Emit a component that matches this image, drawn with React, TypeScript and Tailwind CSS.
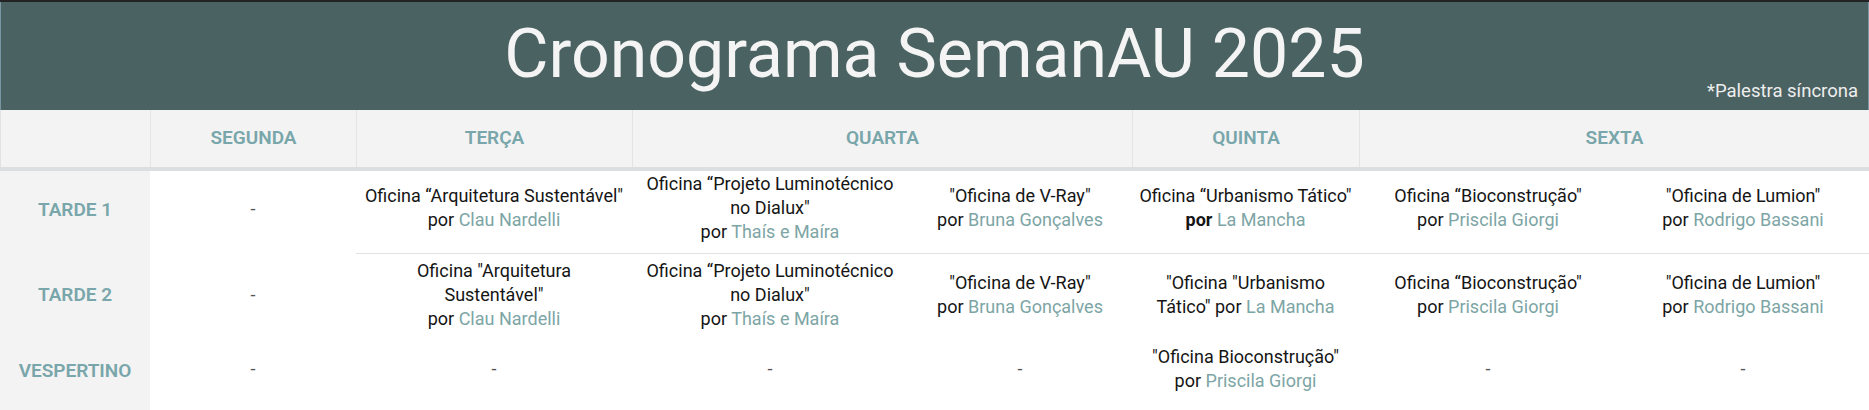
import type { ReactNode } from 'react';

type Talk = {
  lines: string[];
  name: string;
  prefix?: string;
  boldPor?: boolean;
};

type Cell = Talk | '-';

const days = [
  { label: 'SEGUNDA', span: 'col-span-1' },
  { label: 'TERÇA', span: 'col-span-1' },
  { label: 'QUARTA', span: 'col-span-2' },
  { label: 'QUINTA', span: 'col-span-1' },
  { label: 'SEXTA', span: 'col-span-2' },
];

const arquitetura: Talk = { lines: ['Oficina “Arquitetura Sustentável"'], name: 'Clau Nardelli' };
const luminotecnico: Talk = {
  lines: ['Oficina “Projeto Luminotécnico', 'no Dialux"'],
  name: 'Thaís e Maíra',
};
const vray: Talk = { lines: ['"Oficina de V-Ray"'], name: 'Bruna Gonçalves' };
const bioconstrucao: Talk = { lines: ['Oficina “Bioconstrução"'], name: 'Priscila Giorgi' };
const lumion: Talk = { lines: ['"Oficina de Lumion"'], name: 'Rodrigo Bassani' };

const rows: { label: string; pad: string; labelPad: string; cells: Cell[] }[] = [
  {
    label: 'TARDE 1',
    pad: 'pt-px pb-[9px]',
    labelPad: 'pt-[5px] pb-[9px]',
    cells: [
      '-',
      arquitetura,
      luminotecnico,
      vray,
      { lines: ['Oficina “Urbanismo Tático"'], name: 'La Mancha', boldPor: true },
      bioconstrucao,
      lumion,
    ],
  },
  {
    label: 'TARDE 2',
    pad: 'pt-[5px] pb-[9px]',
    labelPad: 'pt-[6px] pb-[9px]',
    cells: [
      '-',
      { lines: ['Oficina "Arquitetura', 'Sustentável"'], name: 'Clau Nardelli' },
      luminotecnico,
      vray,
      { lines: ['"Oficina "Urbanismo'], prefix: 'Tático"', name: 'La Mancha' },
      bioconstrucao,
      lumion,
    ],
  },
  {
    label: 'VESPERTINO',
    pad: 'pt-[5px] pb-[17px]',
    labelPad: 'pt-[9px] pb-[17px]',
    cells: [
      '-',
      '-',
      '-',
      '-',
      { lines: ['"Oficina Bioconstrução"'], name: 'Priscila Giorgi' },
      '-',
      '-',
    ],
  },
];

function TalkCell({ cell }: { cell: Cell }): ReactNode {
  if (cell === '-') return <span className="text-[#555]">-</span>;
  return (
    <div className="flex flex-col items-center text-center whitespace-nowrap">
      {cell.lines.map((line) => (
        <span key={line}>{line}</span>
      ))}
      <span>
        {cell.prefix ? `${cell.prefix} ` : ''}
        <span className={cell.boldPor ? 'font-bold' : ''}>por</span>{' '}
        <span className="text-[#7da5a5]">{cell.name}</span>
      </span>
    </div>
  );
}

function App() {
  return (
    <div className="w-[1869px] h-[410px] overflow-hidden bg-white font-['Roboto',sans-serif]">
      <div className="h-[2px] bg-[#232323]" />
      <div className="relative h-[108px] border-x border-[#7b97a3] bg-[#4b6262] pt-[18px] text-center">
        <h1 className="text-[68px] leading-none font-normal text-[#f4f4f4]">Cronograma SemanAU 2025</h1>
        <span className="absolute right-[10px] bottom-[10px] text-[18.5px] leading-none text-[#eeeeee]">
          *Palestra síncrona
        </span>
      </div>

      <div className="grid grid-cols-[150px_206px_276px_276px_224px_227px_258px_252px]">
        <div className="h-[57px] border-l border-[#e2e2e2] bg-[#f3f3f3]" />
        {days.map((day) => (
          <div
            key={day.label}
            className={`${day.span} flex h-[57px] items-center justify-center border-l border-[#e4e4e4] bg-[#f3f3f3] text-[19px] font-semibold text-[#78a6aa]`}
          >
            {day.label}
          </div>
        ))}
        <div className="col-span-8 h-[4px] bg-[#dcdfe1]" />

        {rows.map((row, r) => (
          <div key={row.label} className="col-span-8 grid grid-cols-subgrid">
            <div
              className={`flex items-center justify-center bg-[#f3f3f3] text-[19px] font-semibold text-[#78a6aa] ${row.labelPad}`}
            >
              {row.label}
            </div>
            {row.cells.map((cell, i) => (
              <div
                key={i}
                className={`flex items-center justify-center text-[18px] leading-[24px] text-[#151515] ${row.pad} ${
                  r === 0 && i >= 1 ? 'border-b border-[#e2e2e2]' : ''
                }`}
              >
                <TalkCell cell={cell} />
              </div>
            ))}
          </div>
        ))}
      </div>
    </div>
  );
}

export default App;
